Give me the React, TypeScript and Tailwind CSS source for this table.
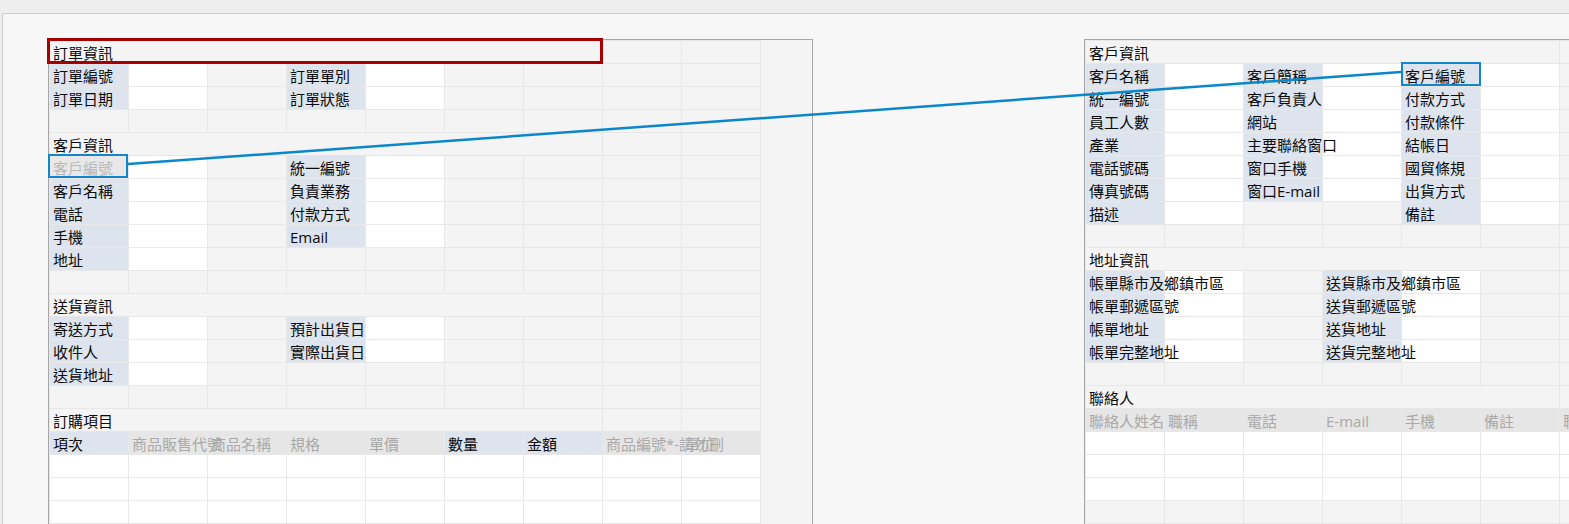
import React from "react";

type Kind = "L" | "W" | "G" | "H" | "X" | "S";
type Cell = { k: Kind; text?: string; span?: number; box?: "red" | "blueL" | "blueR" };

const g = (): Cell => ({ k: "G" });
const w = (): Cell => ({ k: "W" });
const L = (text: string, box?: Cell["box"]): Cell => ({ k: "L", text, box });
const H = (text: string): Cell => ({ k: "H", text });
const fill = (n: number, f: () => Cell) => Array.from({ length: n }, f);

const leftRows: Cell[][] = [
  [{ k: "S", text: "訂單資訊", span: 7, box: "red" }, g(), g()],
  [L("訂單編號"), w(), g(), L("訂單單別"), w(), g(), g(), g(), g()],
  [L("訂單日期"), w(), g(), L("訂單狀態"), w(), g(), g(), g(), g()],
  fill(9, g),
  [{ k: "S", text: "客戶資訊", span: 7 }, g(), g()],
  [{ k: "X", text: "客戶編號", box: "blueL" }, w(), g(), L("統一編號"), w(), g(), g(), g(), g()],
  [L("客戶名稱"), w(), g(), L("負責業務"), w(), g(), g(), g(), g()],
  [L("電話"), w(), g(), L("付款方式"), w(), g(), g(), g(), g()],
  [L("手機"), w(), g(), L("Email"), w(), g(), g(), g(), g()],
  [L("地址"), w(), g(), g(), g(), g(), g(), g(), g()],
  fill(9, g),
  [{ k: "S", text: "送貨資訊", span: 7 }, g(), g()],
  [L("寄送方式"), w(), g(), L("預計出貨日"), w(), g(), g(), g(), g()],
  [L("收件人"), w(), g(), L("實際出貨日"), w(), g(), g(), g(), g()],
  [L("送貨地址"), w(), g(), g(), g(), g(), g(), g(), g()],
  fill(9, g),
  [{ k: "S", text: "訂購項目", span: 7 }, g(), g()],
  [L("項次"), H("商品販售代號"), H("商品名稱"), H("規格"), H("單價"), L("數量"), L("金額"), H("商品編號*-請勿刪"), H("單位")],
  fill(9, w),
  fill(9, w),
  fill(9, w),
];

const rightRows: Cell[][] = [
  [{ k: "S", text: "客戶資訊", span: 6 }, g()],
  [L("客戶名稱"), w(), L("客戶簡稱"), w(), L("客戶編號", "blueR"), w(), g()],
  [L("統一編號"), w(), L("客戶負責人"), w(), L("付款方式"), w(), g()],
  [L("員工人數"), w(), L("網站"), w(), L("付款條件"), w(), g()],
  [L("產業"), w(), L("主要聯絡窗口"), w(), L("結帳日"), w(), g()],
  [L("電話號碼"), w(), L("窗口手機"), w(), L("國貿條規"), w(), g()],
  [L("傳真號碼"), w(), L("窗口E-mail"), w(), L("出貨方式"), w(), g()],
  [L("描述"), w(), g(), g(), L("備註"), w(), g()],
  fill(7, g),
  [{ k: "S", text: "地址資訊", span: 6 }, g()],
  [L("帳單縣市及鄉鎮市區"), w(), g(), L("送貨縣市及鄉鎮市區"), w(), g(), g()],
  [L("帳單郵遞區號"), w(), g(), L("送貨郵遞區號"), w(), g(), g()],
  [L("帳單地址"), w(), g(), L("送貨地址"), w(), g(), g()],
  [L("帳單完整地址"), w(), g(), L("送貨完整地址"), w(), g(), g()],
  fill(7, g),
  [{ k: "S", text: "聯絡人", span: 6 }, g()],
  [H("聯絡人姓名"), H("職稱"), H("電話"), H("E-mail"), H("手機"), H("備註"), H("聯絡人")],
  fill(7, w),
  fill(7, w),
  fill(7, w),
  fill(7, g),
];

const bgFor: Record<Kind, string> = {
  L: "bg-[#dde4ed]",
  W: "bg-white",
  G: "bg-[#f4f4f4]",
  H: "bg-[#e6e6e6]",
  X: "bg-[#e8e8e8]",
  S: "bg-[#f4f4f4]",
};

const textFor: Record<Kind, string> = {
  L: "text-[#0a0a0a]",
  W: "text-[#0a0a0a]",
  G: "text-[#0a0a0a]",
  H: "text-[#a9a9a9]",
  X: "text-[#b8b8b8]",
  S: "text-[#0a0a0a]",
};

function SheetCell({ c }: { c: Cell }) {
  const width = c.span === 7 ? "w-[553px]" : c.span === 6 ? "w-[474px]" : "w-[79px]";
  const border = c.k === "S" ? "border-b border-r border-[#e6e6e6]" : "border-b border-r border-[#e8e8e8]";
  return (
    <div className={`relative shrink-0 h-[23px] ${width} ${bgFor[c.k]} ${border}`}>
      {c.text && (
        <span
          className={`relative z-10 block whitespace-nowrap pl-[3px] pt-[2px] leading-[20px] text-[15px] ${textFor[c.k]}`}
        >
          {c.text}
        </span>
      )}
      {c.box === "red" && (
        <div className="absolute -left-[3px] -top-[3px] right-[-1px] bottom-[-1px] z-20 border-[3px] border-[#a80000]" />
      )}
      {c.box === "blueL" && (
        <div className="absolute -left-[2px] -top-[2px] right-0 bottom-0 z-20 border-[2.5px] border-[#1385cc]" />
      )}
      {c.box === "blueR" && (
        <div className="absolute -left-[1px] -top-[2px] -right-[1px] bottom-0 z-20 border-[2.5px] border-[#1385cc]" />
      )}
    </div>
  );
}

function Sheet({ rows, className }: { rows: Cell[][]; className: string }) {
  return (
    <div className={`shrink-0 border border-[#a6a6a6] bg-[#f4f4f4] ${className}`}>
      <div className="flex">
        <div className="border-t border-l border-[#e8e8e8] flex flex-col">
          {rows.map((row, i) => (
            <div key={i} className="flex">
              {row.map((c, j) => (
                <SheetCell key={j} c={c} />
              ))}
            </div>
          ))}
        </div>
      </div>
    </div>
  );
}

export default function App() {
  return (
    <div className="relative w-[1569px] h-[524px] overflow-hidden bg-[#eeeeee] font-['Open_Sans','Noto_Sans_CJK_TC',sans-serif]">
      <div className="h-[13px] bg-[#eeeeee]" />
      <div className="ml-[2px] h-[511px] border-t border-l border-[#cdcdcd] bg-[#f7f7f7] flex items-start pt-[25px] overflow-hidden">
        <Sheet rows={leftRows} className="ml-[45px] w-[765px]" />
        <Sheet rows={rightRows} className="ml-[271px]" />
      </div>
      <svg
        className="absolute inset-0 pointer-events-none z-30"
        width={1569}
        height={524}
        viewBox="0 0 1569 524"
      >
        <line x1={128} y1={164} x2={1401} y2={72} stroke="#0a86cc" strokeWidth={2.5} />
      </svg>
    </div>
  );
}
